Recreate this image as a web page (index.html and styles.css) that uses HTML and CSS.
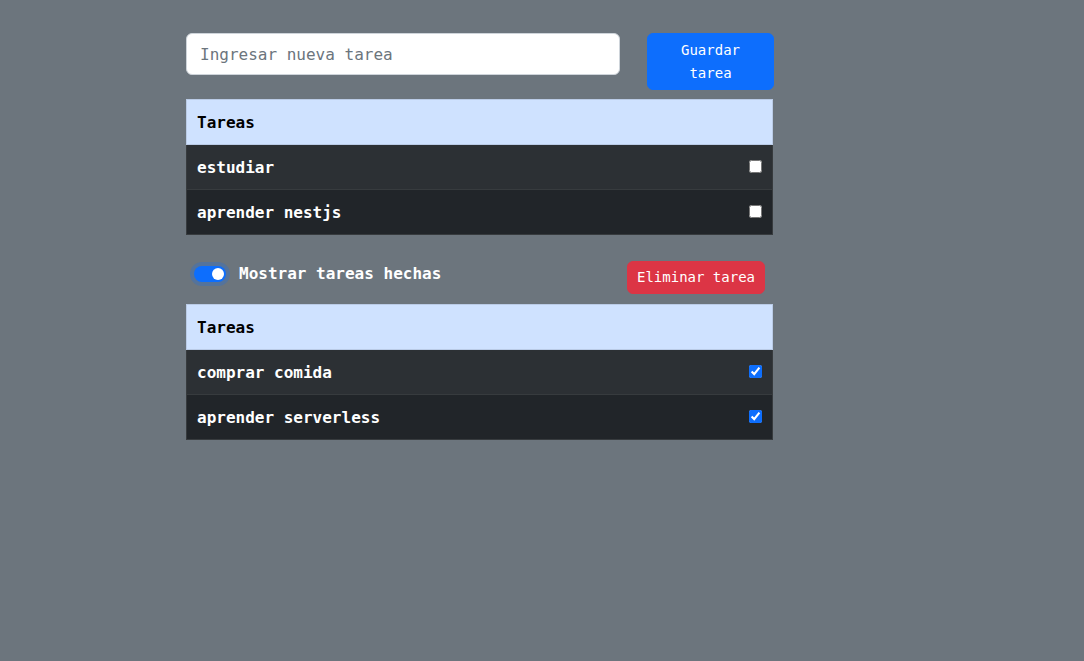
FILE: index.html
```html
<!DOCTYPE html>
<html lang="es">
<head>
<meta charset="utf-8">
<title>Tareas</title>
<link rel="stylesheet" href="styles.css">
</head>
<body>
<main class="app">
  <form class="new-task">
    <input class="task-input" type="text" placeholder="Ingresar nueva tarea">
    <button class="btn btn-primary" type="button">Guardar tarea</button>
  </form>

  <table class="task-table">
    <thead>
      <tr><th colspan="2">Tareas</th></tr>
    </thead>
    <tbody>
      <tr class="striped"><td>estudiar</td><td class="check-cell"><input type="checkbox"></td></tr>
      <tr><td>aprender nestjs</td><td class="check-cell"><input type="checkbox"></td></tr>
    </tbody>
  </table>

  <div class="done-bar">
    <label class="switch-label">
      <span class="switch"><span class="knob"></span></span>
      <span class="switch-text">Mostrar tareas hechas</span>
    </label>
    <button class="btn btn-danger" type="button">Eliminar tarea</button>
  </div>

  <table class="task-table">
    <thead>
      <tr><th colspan="2">Tareas</th></tr>
    </thead>
    <tbody>
      <tr class="striped"><td>comprar comida</td><td class="check-cell"><input type="checkbox" checked></td></tr>
      <tr><td>aprender serverless</td><td class="check-cell"><input type="checkbox" checked></td></tr>
    </tbody>
  </table>
</main>
</body>
</html>
```

FILE: styles.css
```css
* { box-sizing: border-box; }

html, body {
  margin: 0;
  padding: 0;
  background: #6c757d;
  font-family: "DejaVu Sans Mono", "Liberation Mono", monospace;
  font-size: 16px;
}

.app {
  width: 588px;
  margin-left: 186px;
  padding-top: 33px;
}

.new-task {
  display: flex;
  align-items: flex-start;
  gap: 27px;
  margin: 0 0 9px 0;
}

.task-input {
  width: 434px;
  height: 42px;
  padding: 0 13px;
  border: 1px solid #ced4da;
  border-radius: 6px;
  background: #fff;
  font-family: inherit;
  font-size: 16px;
  color: #212529;
  outline: none;
}
.task-input::placeholder { color: #6c757d; }

.btn {
  border: 1px solid transparent;
  border-radius: 6px;
  color: #fff;
  font-family: inherit;
  font-size: 14px;
  cursor: pointer;
}

.btn-primary {
  width: 127px;
  padding: 5px 12px 4px;
  line-height: 23px;
  background: #0d6efd;
  border-color: #0d6efd;
  text-align: center;
}

.btn-danger {
  padding: 5px 9px;
  line-height: 21px;
  background: #dc3545;
  border-color: #dc3545;
}

.task-table {
  width: 587px;
  border-collapse: collapse;
  font-weight: bold;
}

.task-table th {
  text-align: left;
  padding: 11px 10px 9px;
  line-height: 24px;
  background: #cfe2ff;
  color: #000;
  border: 1px solid #bacbe6;
}

.task-table td {
  padding: 11px 10px 9px;
  line-height: 24px;
  background: #212529;
  color: #fff;
  border-top: 1px solid #373b3e;
  border-bottom: 1px solid #373b3e;
}
.task-table td:first-child { border-left: 1px solid #373b3e; }
.task-table td:last-child { border-right: 1px solid #373b3e; }

.task-table tr.striped td { background: #2c3034; }

.task-table .check-cell {
  width: 30px;
  text-align: right;
  padding: 0 10px 1px 0;
  vertical-align: middle;
}

.check-cell input {
  width: 13px;
  height: 13px;
  margin: 0;
  display: block;
  margin-left: auto;
  accent-color: #0d6efd;
}

.done-bar {
  display: flex;
  justify-content: space-between;
  align-items: flex-start;
  margin: 26px 9px 10px 0;
}

.switch-label {
  display: flex;
  align-items: center;
  gap: 13px;
  margin-left: 8px;
  line-height: 24px;
  font-weight: bold;
  color: #fff;
  cursor: pointer;
}

.switch-text { padding-top: 1px; }

.switch {
  position: relative;
  width: 32px;
  height: 16px;
  border-radius: 8px;
  background: #0d6efd;
  box-shadow: 0 0 0 4px rgba(13, 110, 253, 0.25);
}

.knob {
  position: absolute;
  top: 2px;
  right: 2px;
  width: 12px;
  height: 12px;
  border-radius: 50%;
  background: #fff;
}
```
